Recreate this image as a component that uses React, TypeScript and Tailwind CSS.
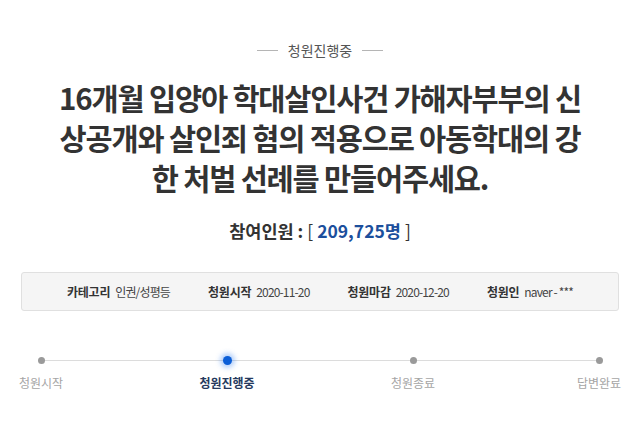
import React from "react";

const FONT = { fontFamily: '"Noto Sans CJK KR", "Noto Sans", sans-serif' };

const INFO = [
  { label: "카테고리", value: "인권/성평등" },
  { label: "청원시작", value: "2020-11-20" },
  { label: "청원마감", value: "2020-12-20" },
  { label: "청원인", value: "naver - ***" },
];

const STEPS = [
  { label: "청원시작", active: false },
  { label: "청원진행중", active: true },
  { label: "청원종료", active: false },
  { label: "답변완료", active: false },
];

export default function App() {
  return (
    <div className="w-[640px] h-[435px] bg-white overflow-hidden" style={FONT}>
      {/* status */}
      <div className="flex items-center justify-center gap-[10px] pt-[40px] h-[60px]">
        <span className="w-[21px] h-px bg-[#b5b5b5]" />
        <span className="text-[14px] leading-[20px] text-[#555]">청원진행중</span>
        <span className="w-[21px] h-px bg-[#b5b5b5]" />
      </div>

      {/* title */}
      <h1 className="mt-[17px] px-[36px] text-center text-[29.5px] leading-[40px] font-bold tracking-[-0.04em] text-[#333]">
        16개월 입양아 학대살인사건 가해자부부의 신<br />
        상공개와 살인죄 혐의 적용으로 아동학대의 강<br />
        한 처벌 선례를 만들어주세요.
      </h1>

      {/* count */}
      <div className="mt-[22px] text-center text-[17.5px] leading-[24px] font-bold text-[#333]">
        참여인원 : <span className="font-normal">[</span>{" "}
        <span className="text-[#1c4f9c]">209,725명</span>{" "}
        <span className="font-normal">]</span>
      </div>

      {/* info box */}
      <div className="mx-[21px] mt-[29px] h-[39px] flex items-center justify-center gap-[38px] bg-[#f5f5f5] border border-[#e0e0e0] rounded-[3px] text-[12px] text-[#333]">
        {INFO.map(i => (
          <div key={i.label} className="flex items-center gap-[5px]">
            <span className="font-bold tracking-[-0.02em]">{i.label}</span>
            <span className="tracking-[-0.07em] text-[#444]">{i.value}</span>
          </div>
        ))}
      </div>

      {/* progress */}
      <div className="relative mt-[36px] flex justify-between">
        <div className="absolute left-[41px] right-[40px] top-[13px] h-px bg-[#dcdcdc]" />
        {STEPS.map(s => (
          <div key={s.label} className="relative w-[82px] flex flex-col items-center">
            <div className="h-[27px] flex items-center">
              {s.active
                ? <span className="w-[9px] h-[9px] rounded-full bg-[#0b5ed7] shadow-[0_0_5px_3px_rgba(40,120,240,0.35)]" />
                : <span className="w-[7px] h-[7px] rounded-full bg-[#9a9a9a]" />}
            </div>
            <span className={`text-[12px] leading-[18px] ${s.active ? "font-bold text-[#263a5e]" : "text-[#a5a5a5]"}`}>
              {s.label}
            </span>
          </div>
        ))}
      </div>
    </div>
  );
}
